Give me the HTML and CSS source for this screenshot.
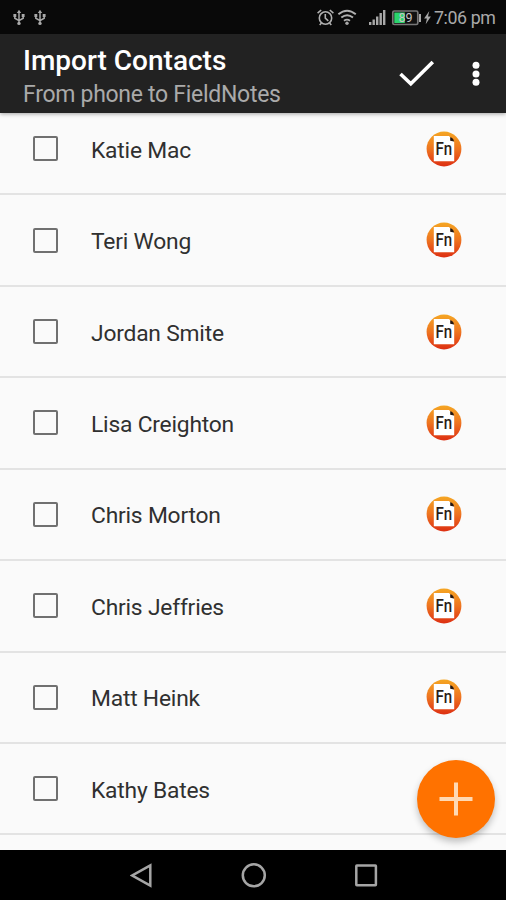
FILE: index.html
```html
<!DOCTYPE html>
<html lang="en">
<head>
<meta charset="utf-8">
<title>Import Contacts</title>
<link rel="stylesheet" href="styles.css">
</head>
<body>
<svg class="defs" width="0" height="0" aria-hidden="true">
  <defs>
    <linearGradient id="badge" x1="0" y1="0" x2="0" y2="1">
      <stop offset="0" stop-color="#f5a623"/><stop offset=".5" stop-color="#ee7420"/><stop offset="1" stop-color="#dd2f12"/>
    </linearGradient>
    <symbol id="usb" viewBox="0 0 12 17">
      <path d="M6 3v11M1.8 6v3.2L6 11.7l4.2-2.5V6" fill="none" stroke="currentColor" stroke-width="1.5"/>
      <path d="M3.8 4 6 .8 8.2 4zM.4 5h2.9v3H.4zM8.7 5h2.9v3H8.7z" fill="currentColor"/>
      <circle cx="6" cy="14.4" r="1.7" fill="currentColor"/>
    </symbol>
    <symbol id="fieldnotes" viewBox="0 0 36 36">
      <circle cx="18" cy="18" r="17.4" fill="url(#badge)"/>
      <path d="M7.8 5H23l5.2 6v19.3H7.8z" fill="#fff"/>
      <path d="M24.2 6.2c2.3.5 3.6 2 3.8 4.4l-3.8-.9z" fill="#24160f"/>
      <text x="9.6" y="24" class="fn" textLength="16.4" lengthAdjust="spacingAndGlyphs">Fn</text>
    </symbol>
  </defs>
</svg>
<div class="screen">
  <div class="status">
    <svg class="usb" width="12" height="17"><use href="#usb"/></svg>
    <svg class="usb" width="12" height="17"><use href="#usb"/></svg>
    <svg class="indicators" width="116" height="20" viewBox="316 8 116 20">
      <g fill="none" stroke="#b0b0b0" stroke-width="1.6">
        <circle cx="325.5" cy="18" r="6.2"/>
        <path d="M325.3 14v4.2l3 2.6M317.6 13.2l3.6-3.2M333.4 13.2 329.8 10M321.5 23l-1.8 2M329.5 23l1.8 2"/>
        <path d="M338.4 14.3q8.6-7.2 17.4 0M341.3 17.6q5.8-4.7 11.7 0M344 20.7q3-2.2 6 0" stroke-width="1.9"/>
      </g>
      <g fill="#a8a8a8">
        <circle cx="347" cy="23.2" r="1.7"/>
        <path d="M369 22h2.4v3H369zM372.5 19.5h2.4V25h-2.4zM376 16.5h2.4V25H376zM379.5 13h2.4v12h-2.4zM383 10h2.4v15H383z"/>
        <path d="M419 14h2v8h-2zM429.3 11l-5.2 7.4h2.8l-1.2 5.8 5.2-7.6H428z"/>
      </g>
      <rect x="392.8" y="11" width="25" height="13.5" rx="1.5" fill="#111" stroke="#777" stroke-width="1.7"/>
      <rect x="394.3" y="12.5" width="10.5" height="10.5" fill="#2bd46c"/>
      <text x="398.5" y="22.2" class="charge">89</text>
    </svg>
    <span class="clock">7:06 pm</span>
  </div>
  <header class="bar">
    <div class="titles">
      <h1>Import Contacts</h1>
      <p>From phone to FieldNotes</p>
    </div>
    <svg class="check" width="38" height="30" viewBox="398 58 38 30"><path d="m400.5 74 10.3 9.8 22-21.8" fill="none" stroke="#fff" stroke-width="3.6"/></svg>
    <svg class="more" width="10" height="28" viewBox="0 0 10 28" fill="#fff"><circle cx="5" cy="5.3" r="3.5"/><circle cx="5" cy="14" r="3.5"/><circle cx="5" cy="22.3" r="3.5"/></svg>
  </header>
  <main class="list">
    <div class="row"><i class="box"></i><span>Katie Mac</span><svg width="36" height="36"><use href="#fieldnotes"/></svg></div>
    <div class="row"><i class="box"></i><span>Teri Wong</span><svg width="36" height="36"><use href="#fieldnotes"/></svg></div>
    <div class="row"><i class="box"></i><span>Jordan Smite</span><svg width="36" height="36"><use href="#fieldnotes"/></svg></div>
    <div class="row"><i class="box"></i><span>Lisa Creighton</span><svg width="36" height="36"><use href="#fieldnotes"/></svg></div>
    <div class="row"><i class="box"></i><span>Chris Morton</span><svg width="36" height="36"><use href="#fieldnotes"/></svg></div>
    <div class="row"><i class="box"></i><span>Chris Jeffries</span><svg width="36" height="36"><use href="#fieldnotes"/></svg></div>
    <div class="row"><i class="box"></i><span>Matt Heink</span><svg width="36" height="36"><use href="#fieldnotes"/></svg></div>
    <div class="row"><i class="box"></i><span>Kathy Bates</span></div>
  </main>
  <button class="fab" aria-label="Add"><svg width="34" height="34" viewBox="0 0 34 34"><path d="M17 .5v33M.5 17h33" stroke="#ffd9b3" stroke-width="4"/></svg></button>
  <nav class="nav">
    <svg width="24" height="26" viewBox="0 0 24 26"><path d="M20.3 2.3v20.4L2.3 12.5z"/></svg>
    <svg width="26" height="26" viewBox="0 0 26 26"><circle cx="12.8" cy="12.3" r="11"/></svg>
    <svg width="24" height="26" viewBox="0 0 24 26"><rect x="2.3" y="2.5" width="19.6" height="19.8" rx=".5"/></svg>
  </nav>
</div>
</body>
</html>
```
FILE: styles.css
```css
* { box-sizing: border-box; }
body { margin: 0; font-family: Roboto, "Liberation Sans", sans-serif; }
.defs { position: absolute; }
.screen {
  position: relative;
  display: flex;
  flex-direction: column;
  width: 506px;
  height: 900px;
  overflow: hidden;
  background: #fafafa;
}
.status {
  flex: none;
  display: flex;
  align-items: center;
  height: 34px;
  padding: 0 11px 0 13px;
  background: #090909;
  color: #a9a9a9;
}
.usb { margin-right: 9px; }
.indicators { margin-left: auto; margin-top: 2px; }
.clock {
  width: 61px;
  margin-left: 2px;
  padding-top: 1px;
  font-size: 17.8px;
  letter-spacing: -.4px;
  white-space: nowrap;
}
.charge { font-size: 12.5px; fill: #c4c4c4; }
.bar {
  position: relative;
  z-index: 1;
  flex: none;
  display: flex;
  align-items: flex-start;
  height: 79px;
  padding: 0 25px 0 23px;
  background: #222;
  box-shadow: 0 1px 4px rgba(0, 0, 0, .35);
}
.titles { flex: 1; white-space: nowrap; }
.titles h1 {
  margin: 10px 0 0;
  font-size: 28px;
  line-height: 34px;
  font-weight: 500;
  color: #fff;
}
.titles p {
  margin: 3px 0 0;
  font-size: 23px;
  line-height: 28px;
  letter-spacing: -.29px;
  color: #aaa;
}
.check { margin-top: 24px; margin-right: 35px; }
.more { margin-top: 26px; }
.list { flex: none; height: 737px; overflow: hidden; }
.row {
  display: flex;
  align-items: center;
  height: 91.43px;
  padding: 0 44px 0 33px;
  border-bottom: 2px solid #e3e3e3;
  font-size: 22.8px;
  letter-spacing: -.2px;
  color: #303030;
}
.row:first-child { margin-top: -9px; }
.row span { flex: 1; padding-top: 3px; }
.box {
  width: 25px;
  height: 25px;
  margin-right: 33px;
  border: 2px solid #707070;
  border-radius: 2px;
}
.fn { font: 500 18px Roboto, sans-serif; fill: #2a1d16; }
.fab {
  position: absolute;
  left: 417px;
  top: 760px;
  display: grid;
  place-items: center;
  width: 78px;
  height: 78px;
  padding: 0;
  border: 0;
  border-radius: 50%;
  background: #ff7200;
  box-shadow: 0 4px 7px rgba(0, 0, 0, .24);
}
.nav {
  position: relative;
  flex: none;
  display: flex;
  align-items: center;
  justify-content: space-between;
  height: 50px;
  padding: 1px 128px 0 130px;
  background: #000;
  fill: none;
  stroke: #a5a5a5;
  stroke-width: 2.5;
}
```
